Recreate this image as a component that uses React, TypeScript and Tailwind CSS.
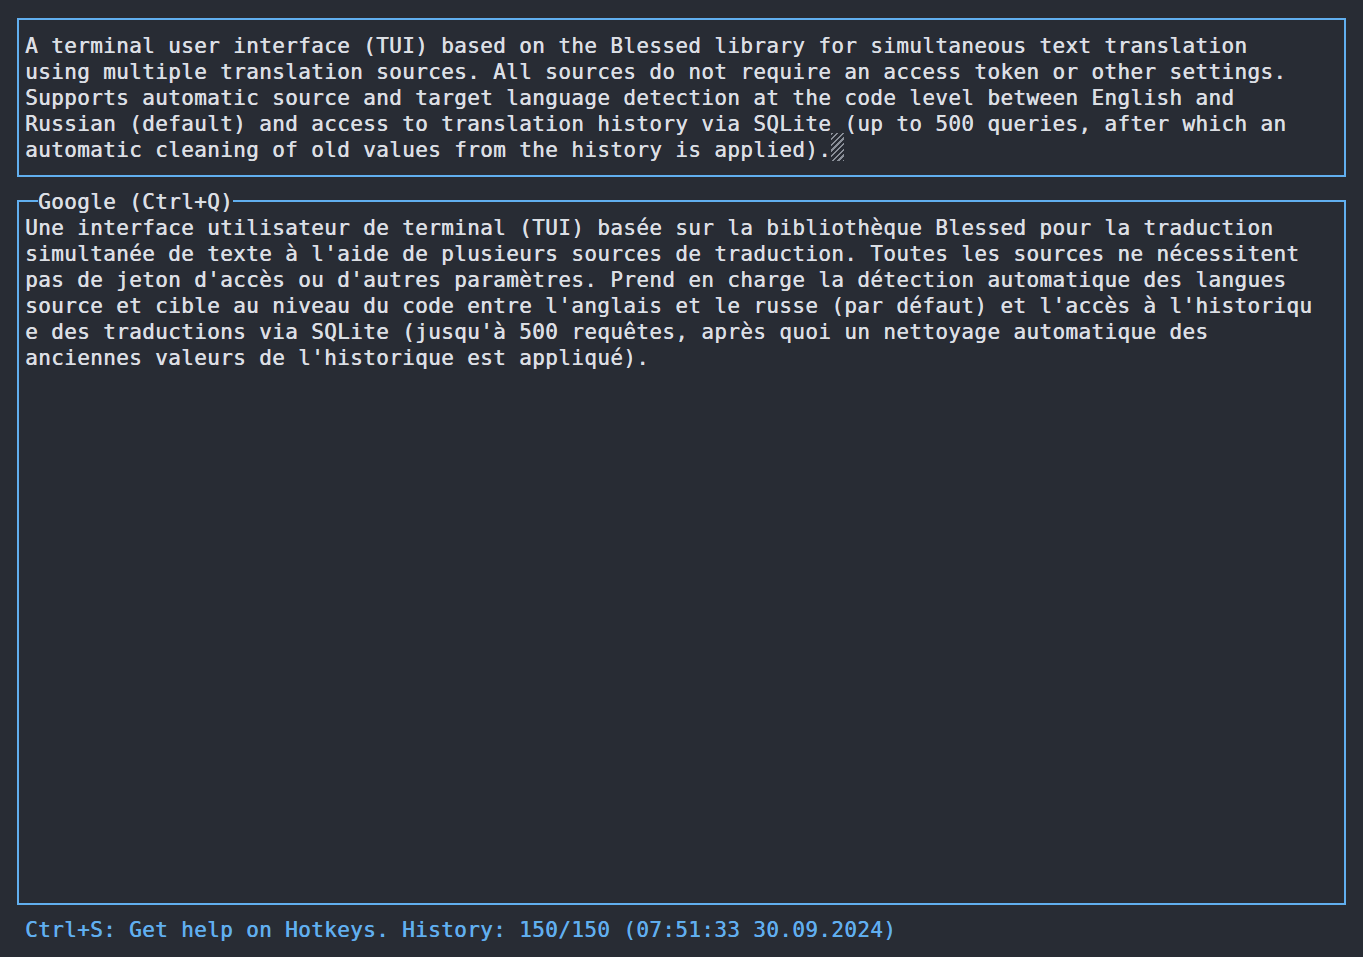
const sourceLines = [
  "A terminal user interface (TUI) based on the Blessed library for simultaneous text translation",
  "using multiple translation sources. All sources do not require an access token or other settings.",
  "Supports automatic source and target language detection at the code level between English and",
  "Russian (default) and access to translation history via SQLite (up to 500 queries, after which an",
];
const lastLine = "automatic cleaning of old values from the history is applied).";

const translatedLines = [
  "Une interface utilisateur de terminal (TUI) basée sur la bibliothèque Blessed pour la traduction",
  "simultanée de texte à l'aide de plusieurs sources de traduction. Toutes les sources ne nécessitent",
  "pas de jeton d'accès ou d'autres paramètres. Prend en charge la détection automatique des langues",
  "source et cible au niveau du code entre l'anglais et le russe (par défaut) et l'accès à l'historiqu",
  "e des traductions via SQLite (jusqu'à 500 requêtes, après quoi un nettoyage automatique des",
  "anciennes valeurs de l'historique est appliqué).",
];

// terminal cell: 13px wide, 26px tall; slight shadow to thicken strokes like the terminal font
const mono =
  "font-['DejaVu_Sans_Mono','Liberation_Mono',monospace] text-[21px] tracking-[0.36px] leading-[26px] [text-shadow:0.4px_0_0_currentColor]";

export default function App() {
  return (
    <div className={`h-[957px] w-full bg-[#282c34] px-[17px] pt-[18px] text-[#dcdfe4] ${mono}`}>
      {/* input box */}
      <div className="h-[159px] border-2 border-[#61afef] pl-[6px] pt-[13px]">
        {sourceLines.map((line, i) => (
          <div key={i} className="whitespace-pre">
            {line}
          </div>
        ))}
        <div className="whitespace-pre">
          {lastLine}
          <span className="relative -top-[4px] inline-block h-[28px] w-[13px] align-top bg-[repeating-linear-gradient(135deg,#8a8f98_0px,#8a8f98_1.5px,transparent_1.5px,transparent_4px)]" />
        </div>
      </div>

      {/* translation box */}
      <div className="relative mt-[23px] h-[705px] border-2 border-[#61afef] pl-[6px] pt-[13px]">
        <span className="absolute -top-[13px] left-[19px] whitespace-pre bg-[#282c34]">
          Google (Ctrl+Q)
        </span>
        {translatedLines.map((line, i) => (
          <div key={i} className="whitespace-pre">
            {line}
          </div>
        ))}
      </div>

      {/* status line */}
      <div className="mt-[12px] whitespace-pre pl-[8px] text-[#61afef]">
        Ctrl+S: Get help on Hotkeys. History: 150/150 (07:51:33 30.09.2024)
      </div>
    </div>
  );
}
